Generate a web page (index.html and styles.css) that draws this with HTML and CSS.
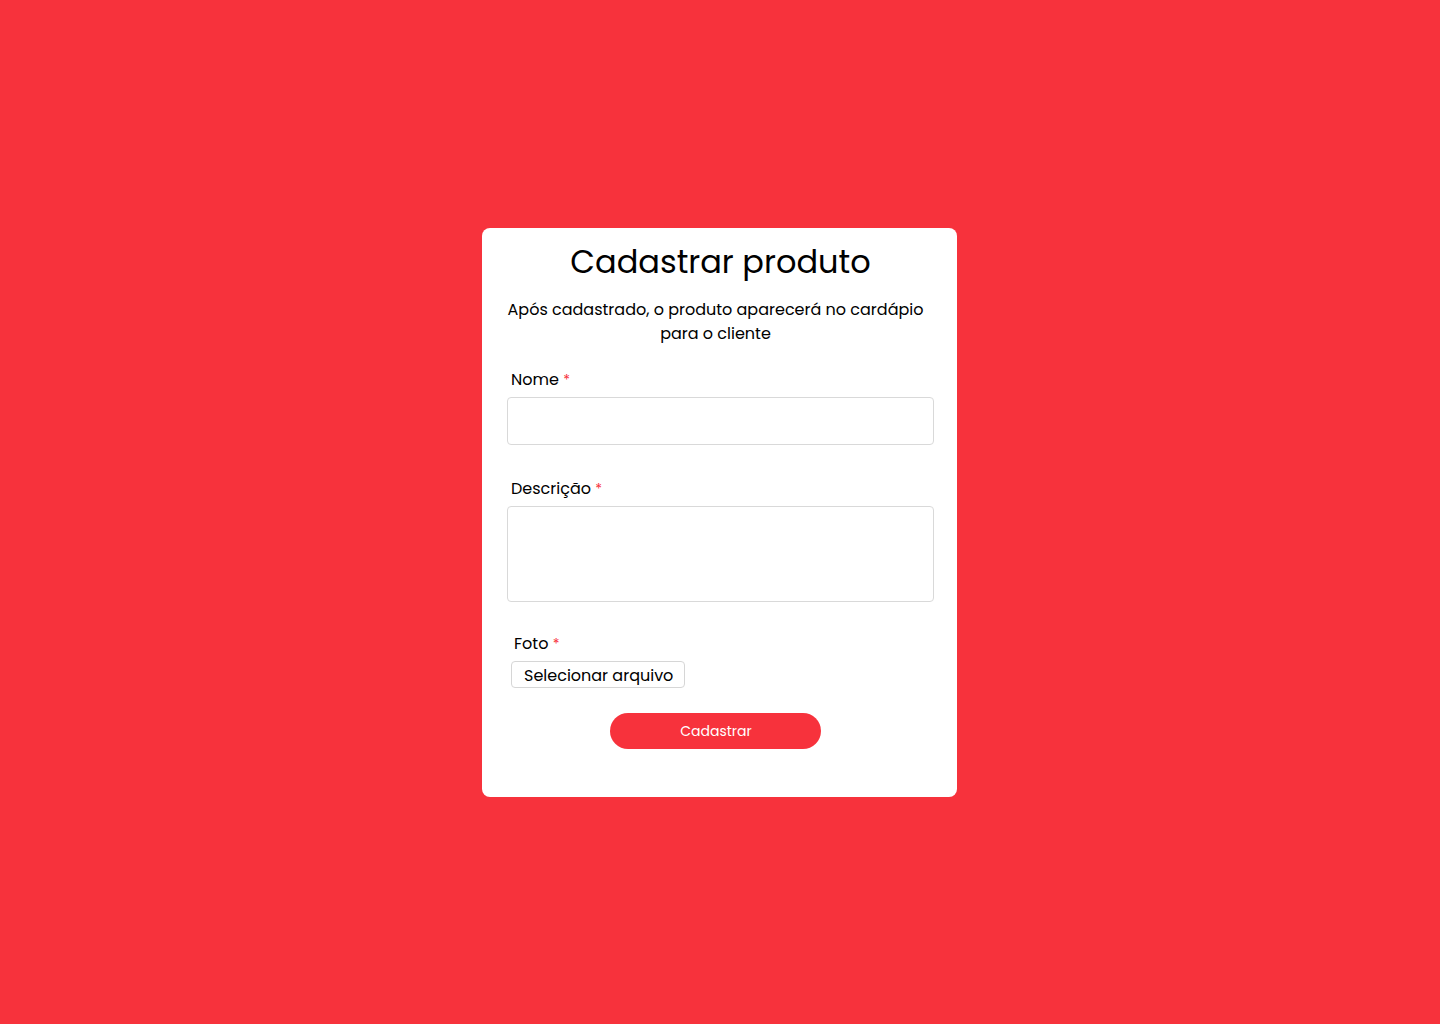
FILE: index.html
```html
<!DOCTYPE html>
<html lang="pt-BR">
<head>
  <meta charset="UTF-8" />
  <title>Cadastrar produto</title>
  <link rel="stylesheet" href="styles.css">
</head>
<body>
  <div class="cartao">
    <h1>Cadastrar produto</h1>
    <p class="subtitulo">Após cadastrado, o produto aparecerá no cardápio para o cliente</p>

    <form class="formulario">
      <div class="campo">
        <label class="rotulo" for="nome">Nome <span class="obrigatorio">*</span></label>
        <input type="text" id="nome" class="entrada">
      </div>

      <div class="campo">
        <label class="rotulo" for="descricao">Descrição <span class="obrigatorio">*</span></label>
        <textarea id="descricao" class="entrada area"></textarea>
      </div>

      <div class="campo campo-foto">
        <span class="rotulo">Foto <span class="obrigatorio">*</span></span>
        <label class="botao-arquivo">
          Selecionar arquivo
          <input type="file" accept="image/*">
        </label>
      </div>

      <button type="button" class="botao">Cadastrar</button>
    </form>
  </div>
</body>
</html>
```

FILE: styles.css
```css
body {
  margin: 0;
  min-height: 100vh;
  display: flex;
  align-items: center;
  justify-content: center;
  background: #f7323c;
  font-family: 'Poppins', 'Open Sans', sans-serif;
  color: #000;
}

.cartao {
  width: 475px;
  box-sizing: border-box;
  background: #fff;
  border-radius: 8px;
  margin-left: -1px;
  padding: 12px 23px 48px 25px;
}

.cartao h1 {
  margin: 0;
  font-size: 32px;
  font-weight: 400;
  line-height: 44px;
  text-align: center;
}

.subtitulo {
  margin: 14px 0 0;
  font-size: 16px;
  line-height: 24px;
  text-align: center;
  padding: 0 10px 0 0;
}

.formulario {
  display: flex;
  flex-direction: column;
  margin-top: 21px;
}

.campo {
  display: flex;
  flex-direction: column;
  margin-bottom: 31px;
}

.campo + .campo {
  margin-bottom: 29px;
}

.campo.campo-foto {
  margin-bottom: 25px;
  padding-left: 4px;
}

.rotulo {
  font-size: 16px;
  line-height: 26px;
  margin: 0 0 4px 4px;
}

.campo-foto .rotulo {
  margin-left: 3px;
}

.obrigatorio {
  color: #f7323c;
  font-size: 14px;
}

.entrada {
  box-sizing: border-box;
  width: 100%;
  height: 48px;
  border: 1px solid #d9d9d9;
  border-radius: 4px;
  font: inherit;
  padding: 8px 12px;
  outline: none;
}

.area {
  height: 96px;
  resize: none;
}

.botao-arquivo {
  align-self: flex-start;
  box-sizing: border-box;
  height: 27px;
  padding: 2px 11px 0 12px;
  border: 1px solid #d6d6d6;
  border-radius: 4px;
  font-size: 16px;
  line-height: 23px;
  cursor: pointer;
}

.botao-arquivo input {
  display: none;
}

.botao {
  align-self: center;
  width: 211px;
  height: 36px;
  margin-right: 11px;
  padding: 2px 0 0 2px;
  border: none;
  border-radius: 18px;
  background: #f7323c;
  color: #fff;
  font-family: inherit;
  font-size: 14px;
  cursor: pointer;
}
```
